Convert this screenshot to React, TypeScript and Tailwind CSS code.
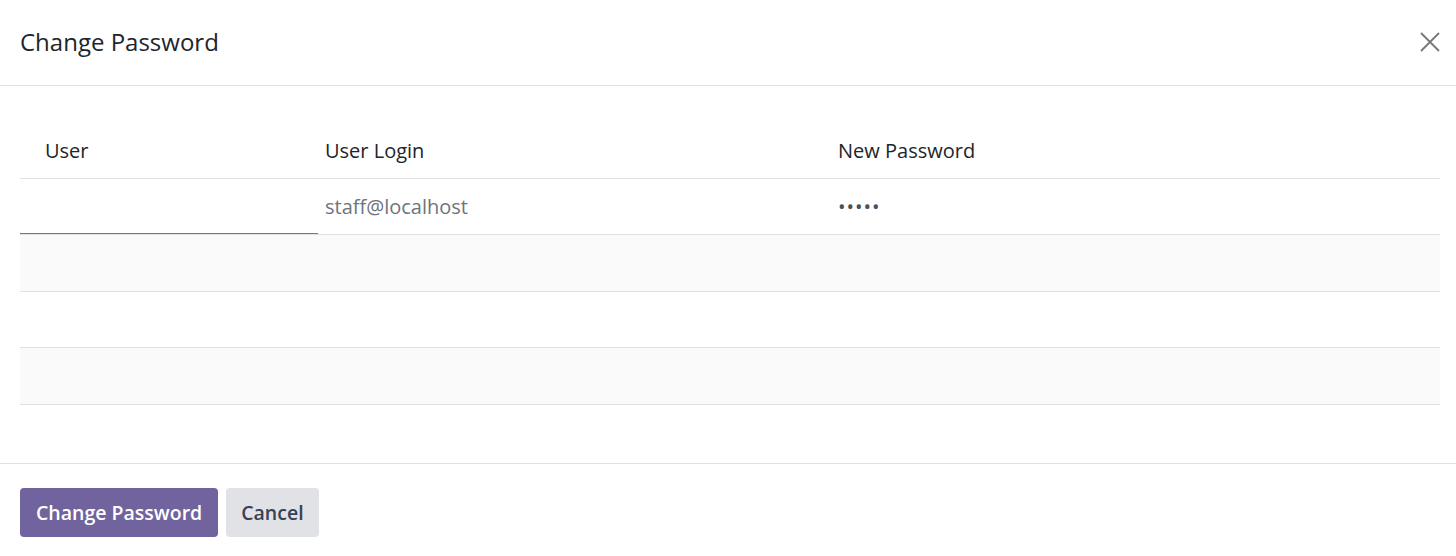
export default function App() {
  const font = { fontFamily: '"Open Sans", "Noto Sans", sans-serif' };
  return (
    <div className="w-[1456px] h-[556px] bg-white text-[#212529] flex flex-col" style={font}>
      {/* Header */}
      <div className="h-[86px] shrink-0 flex items-center justify-between pl-5 pr-4 border-b border-[#dee2e6]">
        <h4 className="text-[24px] leading-none -mt-[1px]">Change Password</h4>
        <button className="w-5 h-5 flex items-center justify-center text-[#777] -mt-[2px]" aria-label="Close">
          <svg width="20" height="20" viewBox="0 0 20 20" stroke="currentColor" strokeWidth="1.8" fill="none">
            <path d="M1 1L19 19M19 1L1 19" />
          </svg>
        </button>
      </div>

      {/* Body */}
      <div className="flex-1 pl-5 pr-4 pt-[36px]">
        <table className="w-full border-collapse text-[20px] table-fixed">
          <colgroup>
            <col className="w-[298px]" />
            <col className="w-[512px]" />
            <col />
          </colgroup>
          <thead>
            <tr className="h-[56px] border-b border-[#dee2e6]">
              <th className="text-left font-normal pl-[25px] pt-[2px]">User</th>
              <th className="text-left font-normal pl-[7px] pt-[2px]">User Login</th>
              <th className="text-left font-normal pl-[8px] pt-[2px]">New Password</th>
            </tr>
          </thead>
          <tbody>
            <tr className="h-[56px] border-b border-[#dee2e6]">
              <td className="p-0 align-bottom">
                <div className="h-[55px] border-b border-[#7c6db0]"></div>
              </td>
              <td className="pl-[7px] pt-[2px] text-[#6c757d]">staff@localhost</td>
              <td className="pl-[8px] pt-[2px] tracking-[1px] text-[#495057]">•••••</td>
            </tr>
            <tr className="h-[57px] border-b border-[#dee2e6] bg-[#fafafa]">
              <td colSpan={3}></td>
            </tr>
            <tr className="h-[56px] border-b border-[#dee2e6]">
              <td colSpan={3}></td>
            </tr>
            <tr className="h-[57px] border-b border-[#dee2e6] bg-[#fafafa]">
              <td colSpan={3}></td>
            </tr>
          </tbody>
        </table>
      </div>

      {/* Footer */}
      <div className="h-[93px] shrink-0 border-t border-[#dee2e6] flex items-start gap-2 px-5 pt-[24px]">
        <button className="h-[49px] px-[16px] rounded-[4px] bg-[#71639e] text-white text-[19.5px] font-semibold">
          Change Password
        </button>
        <button className="h-[49px] px-[15px] rounded-[4px] bg-[#e0e2e6] text-[#374151] text-[19.5px] font-semibold">
          Cancel
        </button>
      </div>
    </div>
  );
}
